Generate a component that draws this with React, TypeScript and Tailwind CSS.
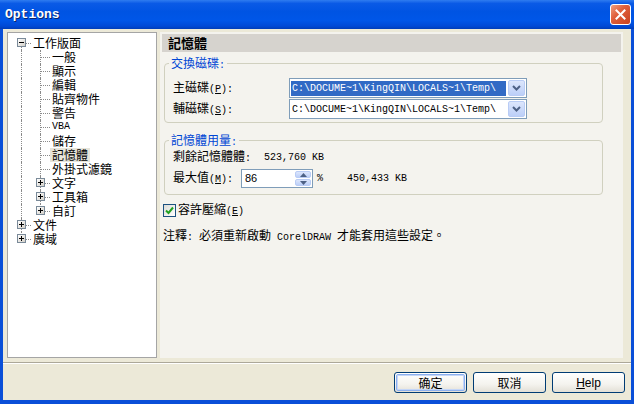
import React from "react";

const FONT = "font-['Liberation_Mono','Noto_Sans_CJK_TC',monospace]";

type TreeRow = {
  label: string;
  level: 0 | 1;
  exp?: "+" | "-";
  a: "full" | "down" | "up";
  b?: "full" | "up";
  selected?: boolean;
  latin?: boolean;
};

const rows: TreeRow[] = [
  { label: "工作版面", level: 0, exp: "-", a: "down" },
  { label: "一般", level: 1, a: "full", b: "full" },
  { label: "顯示", level: 1, a: "full", b: "full" },
  { label: "編輯", level: 1, a: "full", b: "full" },
  { label: "貼齊物件", level: 1, a: "full", b: "full" },
  { label: "警告", level: 1, a: "full", b: "full" },
  { label: "VBA", level: 1, a: "full", b: "full", latin: true },
  { label: "儲存", level: 1, a: "full", b: "full" },
  { label: "記憶體", level: 1, a: "full", b: "full", selected: true },
  { label: "外掛式濾鏡", level: 1, a: "full", b: "full" },
  { label: "文字", level: 1, a: "full", b: "full", exp: "+" },
  { label: "工具箱", level: 1, a: "full", b: "full", exp: "+" },
  { label: "自訂", level: 1, a: "full", b: "up", exp: "+" },
  { label: "文件", level: 0, a: "full", exp: "+" },
  { label: "廣域", level: 0, a: "up", exp: "+" },
];

function Expander({ sign, left }: { sign: "+" | "-"; left: number }) {
  return (
    <div
      className="absolute top-[2px] w-[9px] h-[9px] border border-[#7a8a99] bg-[linear-gradient(to_bottom_right,#ffffff,#d4d0c8)] flex items-center justify-center"
      style={{ left }}
    >
      <svg width="7" height="7" viewBox="0 0 7 7">
        <path d="M1 3.5 H6" stroke="#000" strokeWidth="1" />
        {sign === "+" && <path d="M3.5 1 V6" stroke="#000" strokeWidth="1" />}
      </svg>
    </div>
  );
}

function Guide({
  width,
  lineX,
  vertical,
  horiz,
  exp,
}: {
  width: number;
  lineX: number;
  vertical: "full" | "down" | "up" | "none";
  horiz: boolean;
  exp?: "+" | "-";
}) {
  return (
    <div className="relative h-[14px] shrink-0" style={{ width }}>
      {vertical === "full" && (
        <div className="absolute top-0 bottom-0 border-l border-dotted border-[#8a8a8a]" style={{ left: lineX }} />
      )}
      {vertical === "down" && (
        <div className="absolute top-[7px] bottom-0 border-l border-dotted border-[#8a8a8a]" style={{ left: lineX }} />
      )}
      {vertical === "up" && (
        <div className="absolute top-0 h-[7px] border-l border-dotted border-[#8a8a8a]" style={{ left: lineX }} />
      )}
      {horiz && (
        <div className="absolute top-[7px] right-0 border-t border-dotted border-[#8a8a8a]" style={{ left: lineX }} />
      )}
      {exp && <Expander sign={exp} left={lineX - 4} />}
    </div>
  );
}

function Tree() {
  return (
    <div className="w-[150px] h-[326px] bg-white border border-[#a5a5a5] pt-[3px] text-[12px] leading-[14px]">
      {rows.map((r, i) => (
        <div key={i} className="flex h-[14px] items-center">
          {r.level === 0 ? (
            <Guide width={23} lineX={13} vertical={r.a} horiz exp={r.exp} />
          ) : (
            <>
              <Guide width={25} lineX={13} vertical="full" horiz={false} />
              <Guide width={17} lineX={7} vertical={r.b || "full"} horiz exp={r.exp} />
            </>
          )}
          <span
            className={`px-[2px] h-[14px] leading-[14px] whitespace-nowrap ${r.selected ? "bg-[#e6e4da]" : ""} ${
              r.latin ? "text-[10px] font-['Liberation_Mono',monospace]" : "font-['Noto_Sans_CJK_TC',sans-serif]"
            }`}
          >
            {r.label}
          </span>
        </div>
      ))}
    </div>
  );
}

function DropBtn() {
  return (
    <div className="w-[17px] h-[16px] m-[1px] rounded-[2px] border border-[#b9ccf5] bg-[linear-gradient(to_bottom,#dce6fc,#bccff8)] flex items-center justify-center">
      <svg width="11" height="8" viewBox="0 0 11 8">
        <path d="M2 2 L5.5 5.5 L9 2" stroke="#4d6185" strokeWidth="2" fill="none" />
      </svg>
    </div>
  );
}

function Combo({ selected }: { selected?: boolean }) {
  return (
    <div className="w-[238px] h-[20px] border border-[#7f9db9] bg-white flex items-center">
      <div className="flex-1 h-full p-[1px] pl-[1px] flex items-center">
        <span
          className={`flex-1 h-[15px] flex items-center pl-[1px] text-[10px] font-['Liberation_Mono',monospace] whitespace-nowrap ${
            selected ? "bg-[#316ac5] text-white" : "text-black"
          }`}
        >
          C:\DOCUME~1\KingQIN\LOCALS~1\Temp\
        </span>
      </div>
      <DropBtn />
    </div>
  );
}

function Group({ label, children, className }: { label: string; children: React.ReactNode; className?: string }) {
  return (
    <div className={`relative ml-[2px] w-[439px] border border-[#d0d0bf] rounded-[4px] ${className || ""}`}>
      <span className="absolute -top-[8px] left-[4px] px-[2px] bg-[#f4f3ee] text-[#0046d5] text-[12px] leading-[14px] font-['Noto_Sans_CJK_TC',sans-serif]">
        {label}
        <span className="text-[10px] font-['Liberation_Mono',monospace]">:</span>
      </span>
      {children}
    </div>
  );
}

function Acc({ k }: { k: string }) {
  return (
    <span className="text-[10px] font-['Liberation_Mono',monospace]">
      (<u>{k}</u>):
    </span>
  );
}

function Spin() {
  return (
    <div className="w-[72px] h-[19px] border border-[#7f9db9] bg-white flex">
      <span className="flex-1 pl-[3px] text-[11px] leading-[17px] font-['Liberation_Sans',sans-serif]">86</span>
      <div className="w-[16px] flex flex-col m-[1px] gap-[1px]">
        <div className="flex-1 rounded-[2px] border border-[#b9ccf5] bg-[linear-gradient(to_bottom,#dce6fc,#bccff8)] flex items-center justify-center">
          <svg width="7" height="4" viewBox="0 0 7 4">
            <path d="M0 4 L3.5 0 L7 4 Z" fill="#4d6185" />
          </svg>
        </div>
        <div className="flex-1 rounded-[2px] border border-[#b9ccf5] bg-[linear-gradient(to_bottom,#dce6fc,#bccff8)] flex items-center justify-center">
          <svg width="7" height="4" viewBox="0 0 7 4">
            <path d="M0 0 L3.5 4 L7 0 Z" fill="#4d6185" />
          </svg>
        </div>
      </div>
    </div>
  );
}

function Btn({ children, def }: { children: React.ReactNode; def?: boolean }) {
  return (
    <div className="w-[73px] h-[21px] rounded-[3px] border border-[#003c74] bg-[linear-gradient(to_bottom,#ffffff_0%,#f4f3ee_60%,#e3e0d6_100%)] p-[1px]">
      <div
        className={`w-full h-full rounded-[2px] flex items-center justify-center text-[12px] ${
          def ? "border border-[#8cb0ef] shadow-[inset_0_0_0_1px_#c4d6f8]" : ""
        }`}
      >
        {children}
      </div>
    </div>
  );
}

export default function App() {
  return (
    <div className={`w-[634px] h-[404px] bg-[#0a4fd8] flex flex-col ${FONT} text-black overflow-hidden`}>
      {/* Title bar */}
      <div className="h-[29px] shrink-0 flex items-center justify-between pl-[5px] pr-[3px] bg-[linear-gradient(to_bottom,#2f7cf0_0%,#0a5ae6_12%,#0054e3_40%,#0056e8_70%,#0049d6_90%,#003cb8_100%)]">
        <span className="text-white font-bold text-[13px] font-['Liberation_Mono',monospace] [text-shadow:1px_1px_0_#0a246a]">
          Options
        </span>
        <div className="w-[21px] h-[21px] rounded-[3px] border border-white bg-[linear-gradient(135deg,#f0a080_0%,#e0603c_40%,#c8401f_100%)] flex items-center justify-center">
          <svg width="11" height="11" viewBox="0 0 11 11">
            <path d="M1.5 1.5 L9.5 9.5 M9.5 1.5 L1.5 9.5" stroke="#fff" strokeWidth="2" strokeLinecap="square" />
          </svg>
        </div>
      </div>

      {/* Body */}
      <div className="flex-1 mx-[3px] mb-[4px] bg-[#ece9d8] flex flex-col">
        <div className="flex pt-[3px] pl-[4px] gap-[3px]">
          <Tree />
          <div className="w-[463px] h-[326px] bg-[#f4f3ee] pt-[2px] px-[2px] flex flex-col text-[12px] font-['Noto_Sans_CJK_TC',sans-serif]">
            <div className="h-[18px] bg-[#d6d3ce] flex items-center pl-[6px] font-bold text-[13px] leading-[18px]">記憶體</div>

            <Group label="交換磁碟" className="mt-[11px] pt-[14px] pb-[3px]">
              <div className="flex items-center h-[20px]">
                <div className="w-[124px] pl-[8px] leading-[14px]">
                  主磁碟<Acc k="P" />
                </div>
                <Combo selected />
              </div>
              <div className="flex items-center h-[20px] mt-[1px]">
                <div className="w-[124px] pl-[8px] leading-[14px]">
                  輔磁碟<Acc k="S" />
                </div>
                <Combo />
              </div>
            </Group>

            <Group label="記憶體用量" className="mt-[17px] pt-[9px] pb-[6px]">
              <div className="flex items-center h-[14px]">
                <div className="w-[99px] pl-[8px] leading-[14px]">
                  剩餘記憶體體<span className="text-[10px] font-['Liberation_Mono',monospace]">:</span>
                </div>
                <span className="text-[10px] font-['Liberation_Mono',monospace]">523,760 KB</span>
              </div>
              <div className="flex items-center h-[19px] mt-[5px]">
                <div className="w-[76px] pl-[8px] leading-[14px]">
                  最大值<Acc k="M" />
                </div>
                <Spin />
                <span className="ml-[4px] text-[10px] font-['Liberation_Mono',monospace]">%</span>
                <span className="ml-[24px] text-[10px] font-['Liberation_Mono',monospace]">450,433 KB</span>
              </div>
            </Group>

            <div className="mt-[8px] ml-[1px] h-[15px] flex items-center">
              <div className="w-[13px] h-[13px] border border-[#1c5180] bg-[linear-gradient(135deg,#dcdcd7,#ffffff)] flex items-center justify-center">
                <svg width="9" height="9" viewBox="0 0 9 9">
                  <path d="M1 4.5 L3.5 7 L8 1.5" stroke="#21a121" strokeWidth="2" fill="none" />
                </svg>
              </div>
              <span className="ml-[2px] leading-[14px]">
                容許壓縮
                <span className="text-[10px] font-['Liberation_Mono',monospace]">
                  (<u>E</u>)
                </span>
              </span>
            </div>

            <div className="mt-[10px] ml-[1px] h-[14px] leading-[14px] whitespace-nowrap">
              注釋<span className="text-[10px] font-['Liberation_Mono',monospace]">: </span>必須重新啟動
              <span className="text-[10px] font-['Liberation_Mono',monospace]"> CorelDRAW </span>
              才能套用這些設定。
            </div>
          </div>
        </div>

        <div className="mt-[4px] border-t border-[#aca899] border-b border-b-white" />

        <div className="mt-[8px] flex justify-end gap-[6px] pr-[6px]">
          <Btn def>
            <span className="font-['Noto_Sans_CJK_SC',sans-serif]">确定</span>
          </Btn>
          <Btn>
            <span className="font-['Noto_Sans_CJK_SC',sans-serif]">取消</span>
          </Btn>
          <Btn>
            <span className="font-['Liberation_Sans',sans-serif] text-[12px]">
              <u>H</u>elp
            </span>
          </Btn>
        </div>
      </div>
    </div>
  );
}
